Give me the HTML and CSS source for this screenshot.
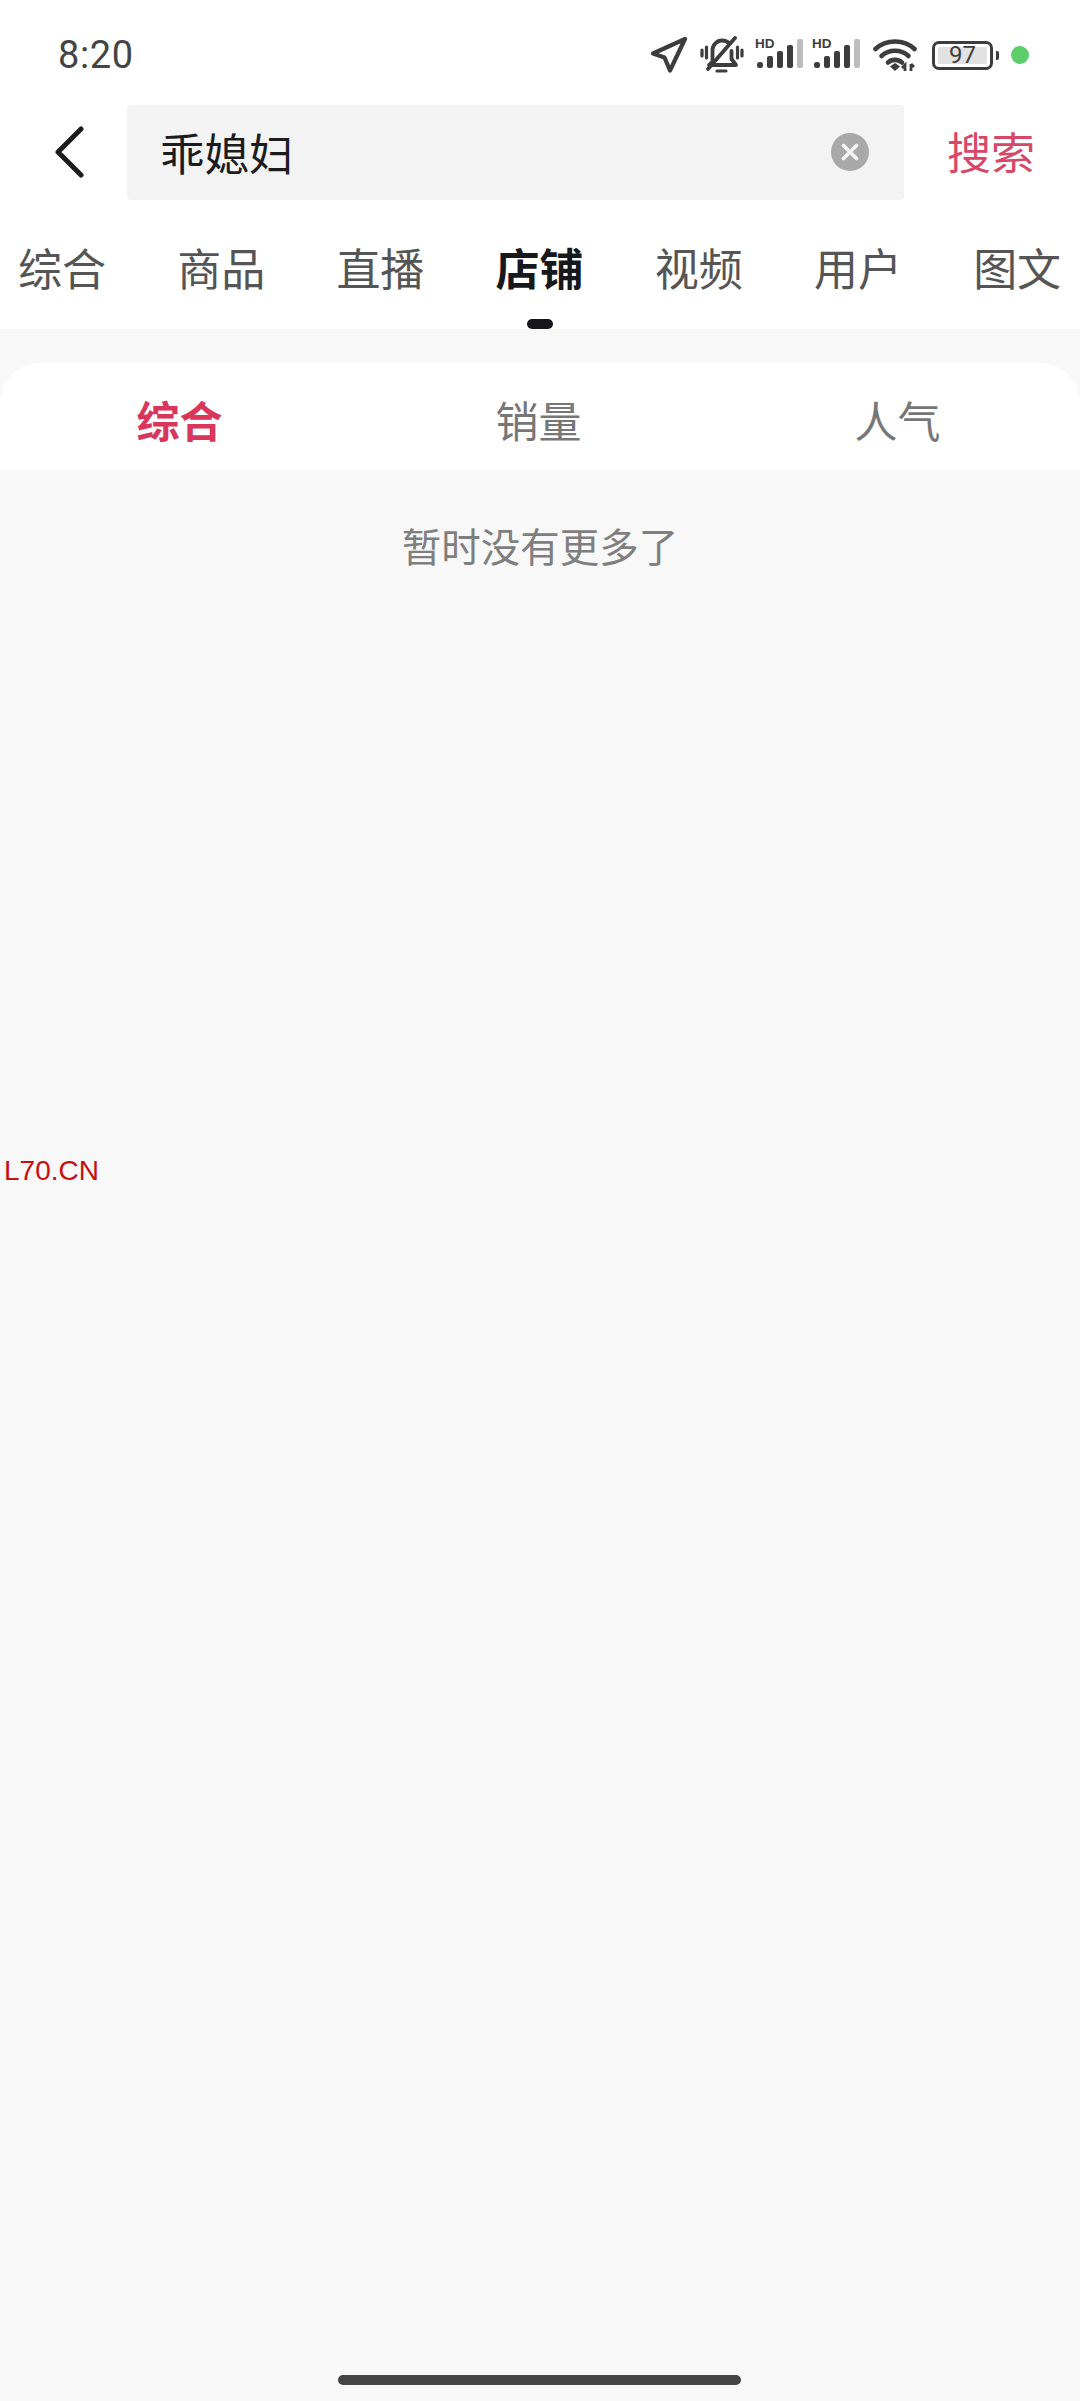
FILE: index.html
```html
<!DOCTYPE html>
<html lang="zh-CN">
<head>
<meta charset="utf-8">
<title>搜索</title>
<link rel="stylesheet" href="styles.css">
</head>
<body>
<div class="page">
  <header class="top">
    <div class="status">
      <span class="time">8:20</span>
      <div class="status-icons">
        <svg class="i-nav" viewBox="0 0 38 36" width="38" height="36"><path d="M35 2 3 16.500l11.500 4L20 33.500z" fill="none" stroke="#3d3d3d" stroke-width="4.200" stroke-linejoin="round"/></svg>
        <svg class="i-bell" viewBox="0 0 44 38" width="44" height="38"><g fill="none" stroke="#3d3d3d" stroke-linecap="round" stroke-linejoin="round"><path stroke-width="3.800" d="M12.500 24V14c0-5 4.500-9.500 9.500-9.500 3 0 5.500 1 7 3M31.500 15v8l4.500 6H9l3-3"/><path stroke-width="3.800" d="M35 2 8 33"/><path stroke-width="3.200" d="M17 35h9M2 14v6M6.500 11v11M37.500 11v11M42 14v6"/></g></svg>
        <svg class="i-sig" viewBox="0 0 48 32" width="48" height="32"><text class="hd" x="0" y="10.500">HD</text><rect x="2" y="25" width="6" height="6" rx="2.500" fill="#3d3d3d"/><rect x="12" y="19" width="6" height="12" rx="2" fill="#3d3d3d"/><rect x="22" y="14" width="6" height="17" rx="2" fill="#3d3d3d"/><rect x="32" y="8" width="6" height="23" rx="2" fill="#3d3d3d"/><rect x="42" y="2" width="6" height="29" rx="2" fill="#bdbdbd"/></svg>
        <svg class="i-sig" viewBox="0 0 48 32" width="48" height="32"><text class="hd" x="0" y="10.500">HD</text><rect x="2" y="25" width="6" height="6" rx="2.500" fill="#3d3d3d"/><rect x="12" y="19" width="6" height="12" rx="2" fill="#3d3d3d"/><rect x="22" y="14" width="6" height="17" rx="2" fill="#3d3d3d"/><rect x="32" y="8" width="6" height="23" rx="2" fill="#3d3d3d"/><rect x="42" y="2" width="6" height="29" rx="2" fill="#bdbdbd"/></svg>
        <svg class="i-wifi" viewBox="0 0 44 34" width="44" height="34"><g fill="none" stroke="#3d3d3d" stroke-width="4.600" stroke-linecap="round"><path d="M2.500 11C13 1 31 1 41.500 11"/><path d="M8.500 18C16 11 28 11 35.500 18"/><path d="M15 24.500C19 21 25 21 29 24.500"/></g><path d="M17 28.500 22 25l5 3.500L22 33z" fill="#3d3d3d"/><path d="M32 33v-6l-3 3M38 26v7M38 26l3 3" fill="none" stroke="#3d3d3d" stroke-width="2.800"/></svg>
        <div class="battery-wrap">
          <div class="battery"><span class="battery-fill">97</span></div>
          <span class="battery-nub"></span>
        </div>
        <span class="dot"></span>
      </div>
    </div>
    <div class="search-row">
      <svg class="back" viewBox="0 0 30 52" width="30" height="52"><path d="M27 3 4 26l23 23" fill="none" stroke="#1c1c1e" stroke-width="5" stroke-linecap="round" stroke-linejoin="round"/></svg>
      <div class="search-box">
        <span class="query">乖媳妇</span>
        <svg class="clear" viewBox="0 0 38 38" width="38" height="38"><circle cx="19" cy="19" r="19" fill="#a9a9a9"/><path d="M12.500 12.500l13 13M25.500 12.500l-13 13" stroke="#f3f3f3" stroke-width="3.800" stroke-linecap="round"/></svg>
      </div>
      <span class="search-btn">搜索</span>
    </div>
    <nav class="tabs">
      <span class="tab">综合</span>
      <span class="tab">商品</span>
      <span class="tab">直播</span>
      <span class="tab tab-on">店铺</span>
      <span class="tab">视频</span>
      <span class="tab">用户</span>
      <span class="tab">图文</span>
    </nav>
  </header>
  <section class="sort">
    <span class="sort-item sort-on">综合</span>
    <span class="sort-item">销量</span>
    <span class="sort-item">人气</span>
  </section>
  <p class="empty">暂时没有更多了</p>
  <span class="watermark">L70.CN</span>
  <span class="home-bar"></span>
</div>
</body>
</html>
```
FILE: styles.css
```css
* { box-sizing: border-box; }
html, body { margin: 0; padding: 0; }
body { font-family: "Noto Sans CJK SC", "Noto Sans", sans-serif; background: #f8f8f8; }
.page { position: relative; width: 1080px; height: 2401px; overflow: hidden; background: #f8f8f8; }

.top { height: 329px; background: #fff; }

.status { height: 105px; padding: 35px 0 0 58px; display: flex; justify-content: space-between; align-items: flex-start; }
.time { font-family: Roboto, sans-serif; font-size: 38px; font-weight: 400; line-height: 40px; color: #444; letter-spacing: 0.6px; }
.status-icons { display: flex; align-items: center; height: 40px; padding-right: 51px; }
.i-bell { margin-left: 12px; }
.i-sig { margin-left: 11px; margin-top: -4px; }
.i-sig + .i-sig { margin-left: 9px; }
.i-wifi { margin-left: 13px; }
.hd { font-family: "Liberation Sans", sans-serif; font-weight: 700; font-size: 13.500px; fill: #3d3d3d; }

.battery-wrap { display: flex; align-items: center; margin-left: 15px; }
.battery { width: 61px; height: 29px; border: 3px solid #3d3d3d; border-radius: 7px; padding: 3px; display: flex; }
.battery-fill { flex: 1; background: #e2e2e2; border-radius: 2px; font-family: Roboto, sans-serif; font-size: 24px; line-height: 17px; text-align: center; color: #3d3d3d; }
.battery-nub { width: 3px; height: 9px; margin-left: 3px; background: #3d3d3d; border-radius: 0 2px 2px 0; }
.dot { width: 18px; height: 18px; margin-left: 12px; border-radius: 50%; background: #5ccf6a; }

.search-row { height: 95px; display: flex; align-items: center; padding-left: 54px; }
.back { flex: none; margin-top: -2px; }
.search-box { width: 777px; height: 95px; margin-left: 43px; padding: 0 35px 2px 33px; background: #f3f3f3; border-radius: 4px; display: flex; align-items: center; justify-content: space-between; }
.query { font-size: 44.500px; line-height: 60px; color: #1c1c1e; }
.search-btn { margin: 0 0 3px 43px; font-size: 44px; line-height: 60px; color: #d84668; }

.tabs { display: flex; gap: 71.200px; padding: 23px 0 0 18px; }
.tab { position: relative; width: 88px; flex: none; font-size: 44px; line-height: 88px; height: 106px; color: #555; text-align: center; white-space: nowrap; }
.tab-on { font-weight: 700; color: #17171c; }
.tab-on::after { content: ""; position: absolute; left: 31px; bottom: 0; width: 26px; height: 10px; border-radius: 5px; background: #17171c; }

.sort { margin-top: 34px; height: 107px; padding: 5px 3px 0 0; display: flex; align-items: center; background: #fff; border-radius: 40px 40px 0 0; }
.sort-item { flex: 1; text-align: center; font-size: 43px; line-height: 60px; color: #777; }
.sort-on { font-weight: 700; color: #d8375b; }

.empty { margin: 47px 0 0; text-align: center; font-size: 39.500px; line-height: 56px; color: #7f7f7f; }

.watermark { position: absolute; left: 4px; top: 1155px; font-family: "Liberation Sans", sans-serif; font-size: 28px; line-height: 32px; color: #c51010; }
.home-bar { position: absolute; left: 338px; top: 2375px; width: 403px; height: 10px; border-radius: 5px; background: #444; }
```
